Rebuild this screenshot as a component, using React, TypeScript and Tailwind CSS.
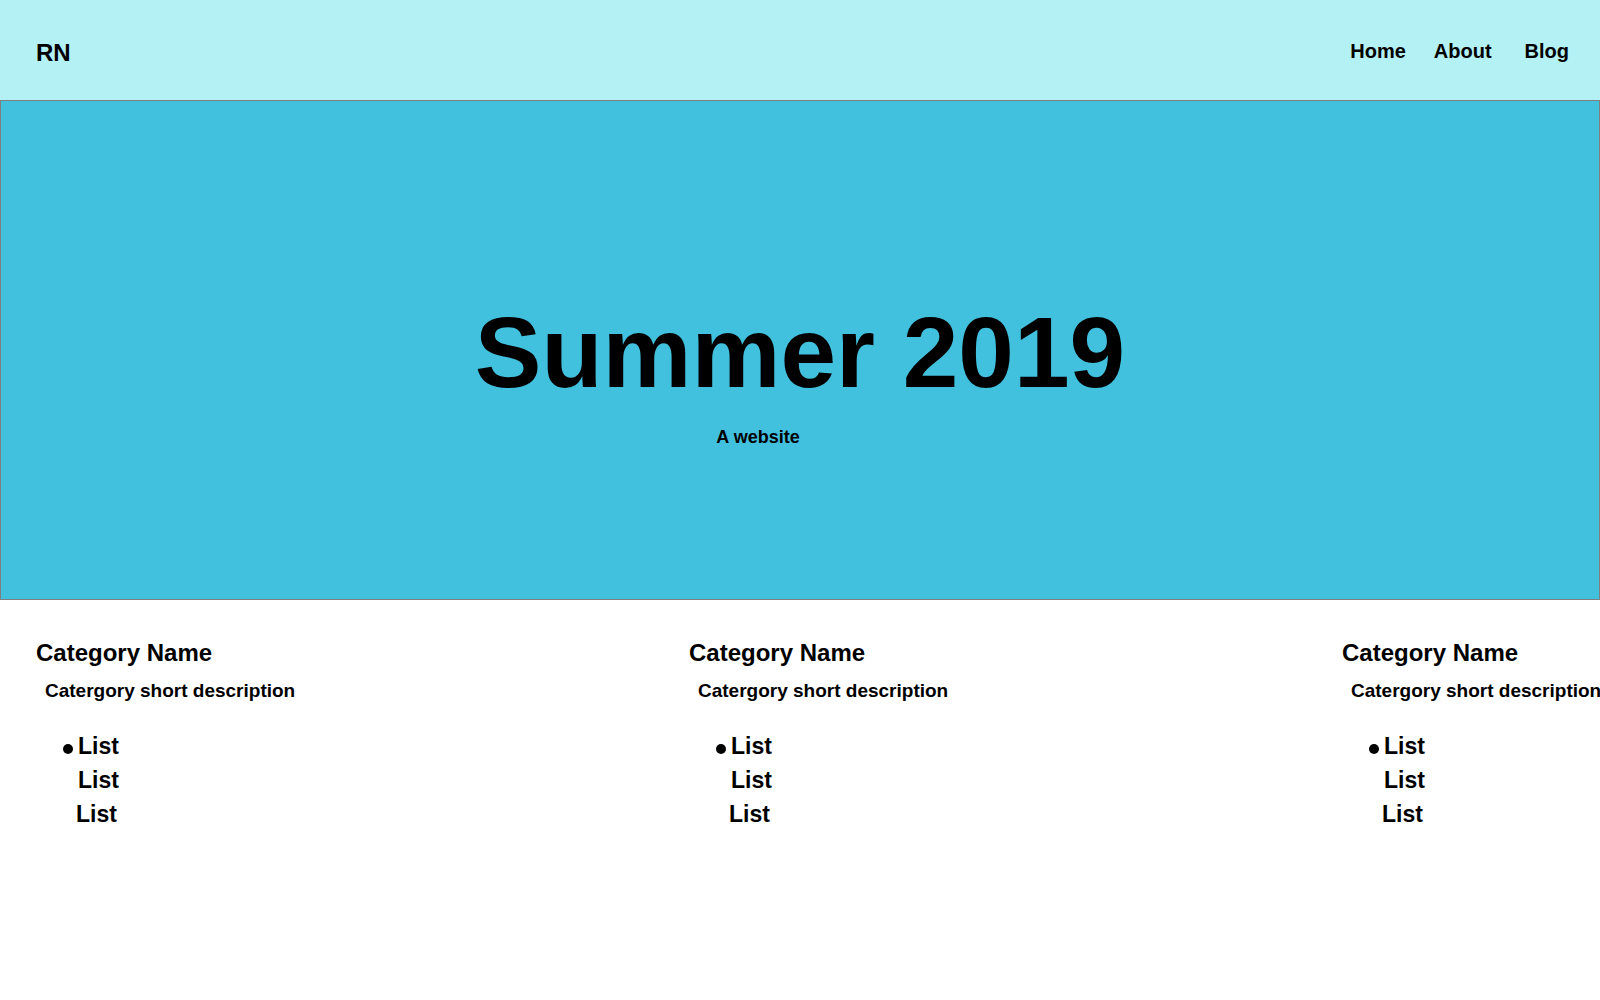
const font = { fontFamily: '"Liberation Sans", Arial, Helvetica, sans-serif' }

function Category() {
  return (
    <div className="w-[653px] shrink-0">
      <h2 className="text-[24px] leading-[24px] font-bold text-black whitespace-nowrap">Category Name</h2>
      <p className="mt-[16px] ml-[9px] text-[19px] leading-[19px] font-bold text-black whitespace-nowrap">
        Catergory short description
      </p>
      <ul className="mt-[29px] pl-[42px] text-[23px] leading-[34px] font-bold text-black">
        <li>
          <span className="inline-block w-[10px] h-[10px] rounded-full bg-black -ml-[15px] mr-[5px]" />
          List
        </li>
        <li>List</li>
        <li className="-ml-[2px]">List</li>
      </ul>
    </div>
  )
}

export default function App() {
  return (
    <div className="w-full min-h-[1000px] bg-white overflow-hidden" style={font}>
      <header className="h-[100px] bg-[#b3f1f4] flex items-start justify-between pt-[41px] pl-[36px] pr-[31px]">
        <div className="text-[24px] leading-[24px] font-bold text-black">RN</div>
        <nav className="flex text-[20px] leading-[20px] font-bold text-black">
          <a>Home</a>
          <a className="ml-[28px]">About</a>
          <a className="ml-[33px]">Blog</a>
        </nav>
      </header>
      <section className="h-[500px] bg-[#42c1df] border border-[#7f7f7f] flex flex-col items-center pt-[201px]">
        <h1 className="text-[100px] leading-[100px] font-bold text-black whitespace-nowrap">Summer 2019</h1>
        <p className="mt-[26px] mr-[84px] text-[18px] leading-[18px] font-bold text-black">A website</p>
      </section>
      <main className="flex pt-[41px] pl-[36px]">
        <Category />
        <Category />
        <Category />
      </main>
    </div>
  )
}
